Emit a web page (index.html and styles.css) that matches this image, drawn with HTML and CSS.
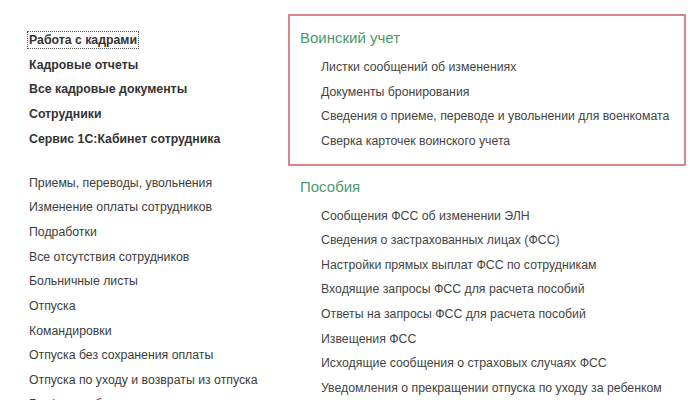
FILE: index.html
```html
<!DOCTYPE html>
<html lang="ru">
<head>
<meta charset="utf-8">
<link rel="stylesheet" href="styles.css">
</head>
<body>
<div class="page">
  <div class="left">
    <div class="group main">
      <div class="row bold"><span class="focus">Работа с кадрами</span></div>
      <div class="row bold">Кадровые отчеты</div>
      <div class="row bold">Все кадровые документы</div>
      <div class="row bold">Сотрудники</div>
      <div class="row bold">Сервис 1С:Кабинет сотрудника</div>
    </div>
    <div class="group docs">
      <div class="row">Приемы, переводы, увольнения</div>
      <div class="row">Изменение оплаты сотрудников</div>
      <div class="row">Подработки</div>
      <div class="row">Все отсутствия сотрудников</div>
      <div class="row">Больничные листы</div>
      <div class="row">Отпуска</div>
      <div class="row">Командировки</div>
      <div class="row">Отпуска без сохранения оплаты</div>
      <div class="row">Отпуска по уходу и возвраты из отпуска</div>
      <div class="row">Графики работы</div>
    </div>
  </div>
  <div class="right">
    <div class="section boxed">
      <div class="title">Воинский учет</div>
      <div class="row item">Листки сообщений об изменениях</div>
      <div class="row item">Документы бронирования</div>
      <div class="row item">Сведения о приеме, переводе и увольнении для военкомата</div>
      <div class="row item">Сверка карточек воинского учета</div>
    </div>
    <div class="section second">
      <div class="title">Пособия</div>
      <div class="row item">Сообщения ФСС об изменении ЭЛН</div>
      <div class="row item">Сведения о застрахованных лицах (ФСС)</div>
      <div class="row item">Настройки прямых выплат ФСС по сотрудникам</div>
      <div class="row item">Входящие запросы ФСС для расчета пособий</div>
      <div class="row item">Ответы на запросы ФСС для расчета пособий</div>
      <div class="row item">Извещения ФСС</div>
      <div class="row item">Исходящие сообщения о страховых случаях ФСС</div>
      <div class="row item">Уведомления о прекращении отпуска по уходу за ребенком</div>
    </div>
  </div>
</div>
</body>
</html>
```

FILE: styles.css
```css
html, body {
  margin: 0;
  padding: 0;
  background: #ffffff;
  width: 700px;
  height: 400px;
  overflow: hidden;
}
.page {
  display: flex;
  font-family: "Liberation Sans", Arial, sans-serif;
  font-size: 12.3px;
  color: #3c3c3c;
}
.left {
  width: 259px;
  padding-left: 29px;
  padding-top: 28px;
  display: flex;
  flex-direction: column;
  gap: 19.5px;
}
.row {
  height: 24.65px;
  line-height: 24.65px;
  white-space: nowrap;
}
.bold {
  font-weight: bold;
  color: #333333;
}
.focus {
  outline: 1px dotted #555;
  outline-offset: 1px;
}
.right {
  display: flex;
  flex-direction: column;
  padding-top: 14px;
  width: 398px;
}
.section {
  padding: 10px 0 0 10px;
  border: 2px solid transparent;
}
.boxed {
  border-color: #d8868a;
  padding-bottom: 10px;
}
.second {
  padding-top: 7px;
}
.title {
  font-size: 15px;
  color: #4a9a6c;
  height: 24px;
  line-height: 24px;
  margin-bottom: 5px;
}
.item {
  padding-left: 21px;
  color: #444444;
}
```
